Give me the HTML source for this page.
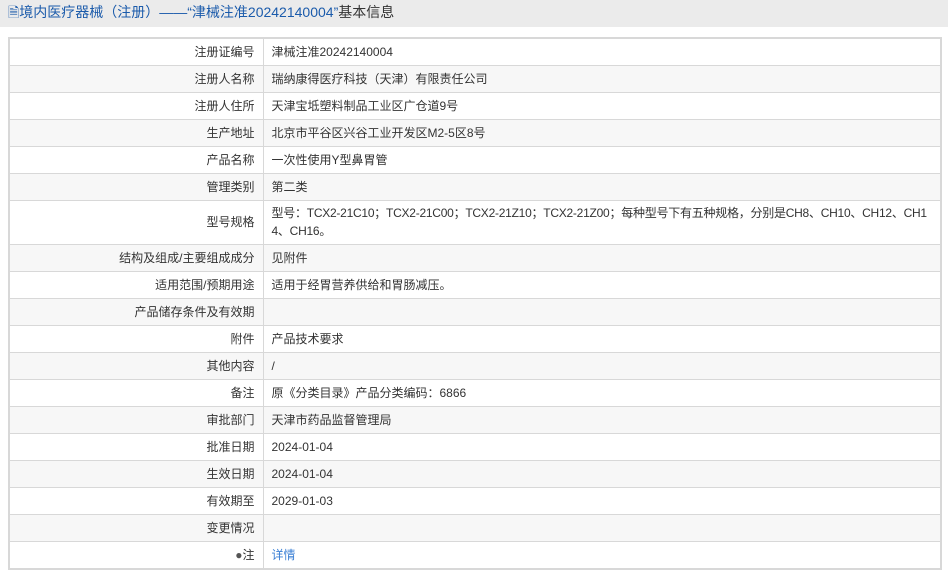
<!DOCTYPE html>
<html><head><meta charset="utf-8"><style>
*{margin:0;padding:0;box-sizing:border-box}
body{width:948px;height:576px;background:#fff;font-family:"Liberation Sans","Noto Sans CJK SC",sans-serif;font-size:12px;color:#333;overflow:hidden}
.hd{height:27px;background:#ebebeb;color:#1b5bab;font-size:14px;line-height:25px;padding-left:8px}
.hd span{color:#333}
table{position:absolute;left:8px;top:37px;width:934px;border-collapse:collapse;border:2px solid #d8d8d8}
td{border:1px solid #d8d8d8;height:27px;padding:0 8px;vertical-align:middle;line-height:18px;word-break:break-all}
td.l{width:254px;text-align:right}
tr:nth-child(even){background:#f7f7f7}
a{color:#3a7fd5;text-decoration:none}
</style></head><body>
<div class="hd">&#128462;境内医疗器械（注册）——“津械注准20242140004”<span>基本信息</span></div>
<table>
<tr><td class="l">注册证编号</td><td>津械注准20242140004</td></tr>
<tr><td class="l">注册人名称</td><td>瑞纳康得医疗科技（天津）有限责任公司</td></tr>
<tr><td class="l">注册人住所</td><td>天津宝坻塑料制品工业区广仓道9号</td></tr>
<tr><td class="l">生产地址</td><td>北京市平谷区兴谷工业开发区M2-5区8号</td></tr>
<tr><td class="l">产品名称</td><td>一次性使用Y型鼻胃管</td></tr>
<tr><td class="l">管理类别</td><td>第二类</td></tr>
<tr><td class="l" style="height:44px">型号规格</td><td style="letter-spacing:-0.25px">型号：TCX2-21C10；TCX2-21C00；TCX2-21Z10；TCX2-21Z00；每种型号下有五种规格，分别是CH8、CH10、CH12、CH14、CH16。</td></tr>
<tr><td class="l">结构及组成/主要组成成分</td><td>见附件</td></tr>
<tr><td class="l">适用范围/预期用途</td><td>适用于经胃营养供给和胃肠减压。</td></tr>
<tr><td class="l">产品储存条件及有效期</td><td></td></tr>
<tr><td class="l">附件</td><td>产品技术要求</td></tr>
<tr><td class="l">其他内容</td><td>/</td></tr>
<tr><td class="l">备注</td><td>原《分类目录》产品分类编码：6866</td></tr>
<tr><td class="l">审批部门</td><td>天津市药品监督管理局</td></tr>
<tr><td class="l">批准日期</td><td>2024-01-04</td></tr>
<tr><td class="l">生效日期</td><td>2024-01-04</td></tr>
<tr><td class="l">有效期至</td><td>2029-01-03</td></tr>
<tr><td class="l">变更情况</td><td></td></tr>
<tr><td class="l" style="height:28px"><span style="color:#555">●</span>注</td><td><a>详情</a></td></tr>
</table>
</body></html>
